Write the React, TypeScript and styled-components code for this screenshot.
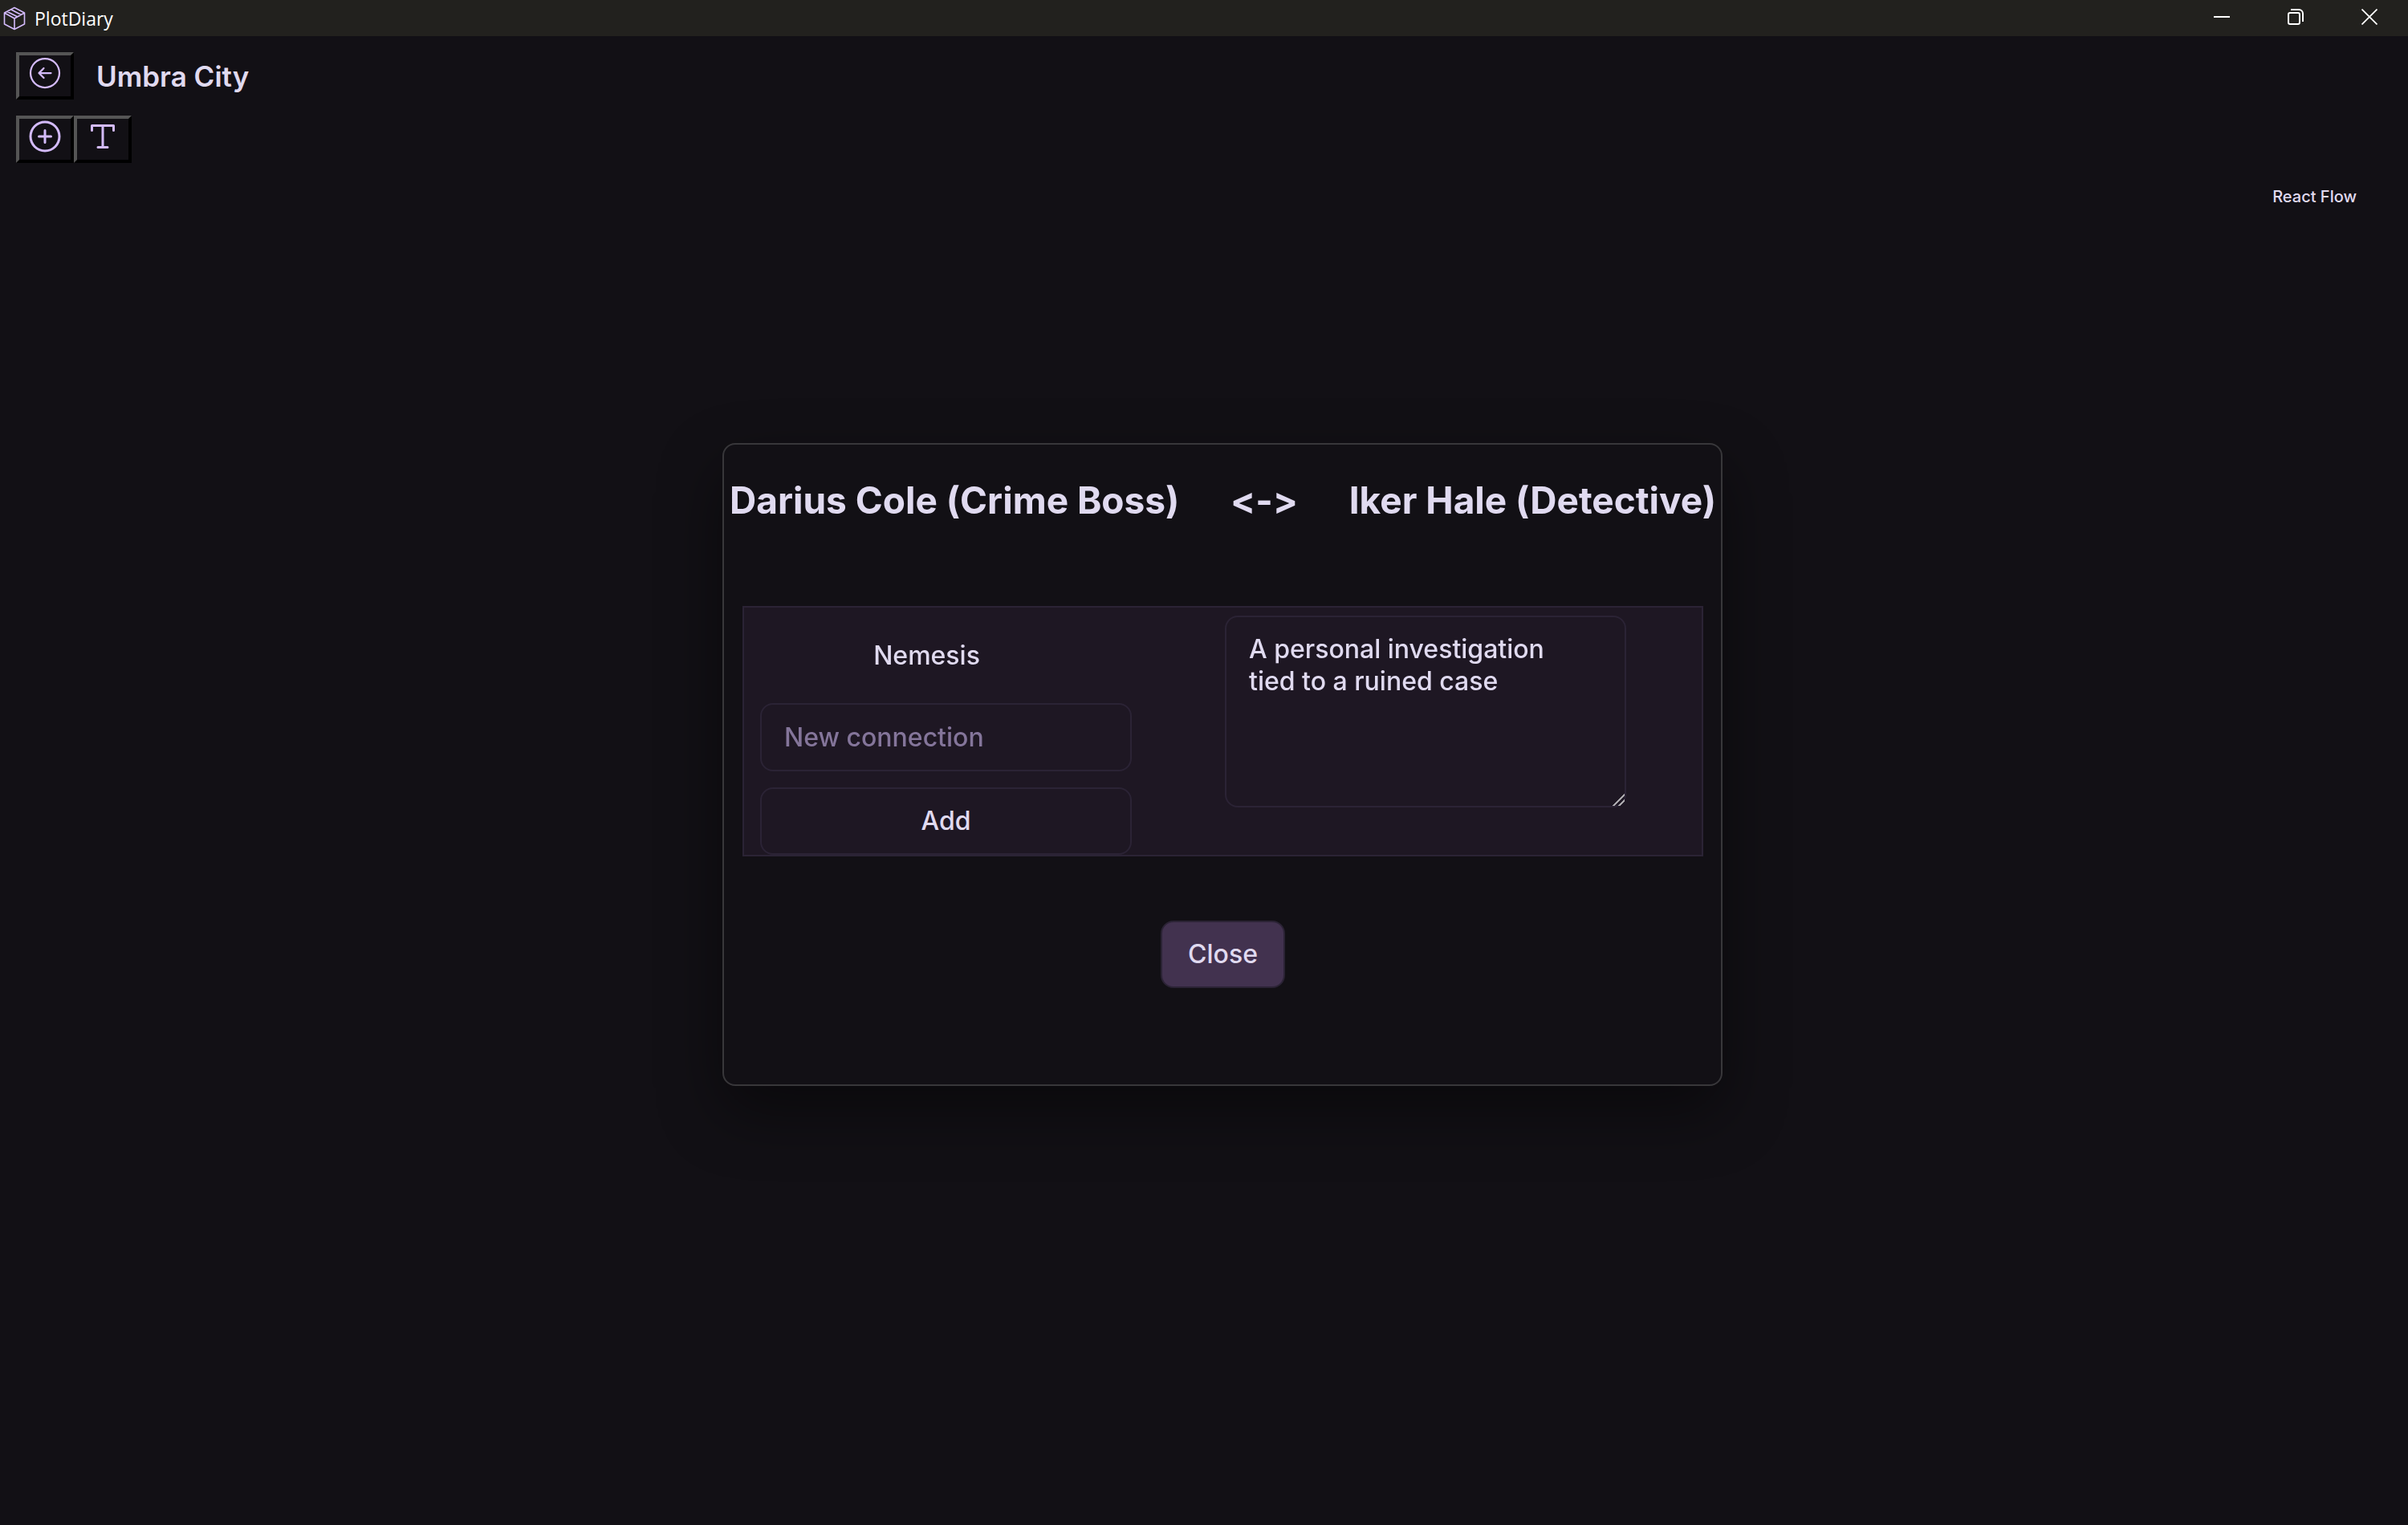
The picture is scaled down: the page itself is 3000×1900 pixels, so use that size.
import React, { useState } from "react";
import styled, { createGlobalStyle } from "styled-components";
import {
  PiArrowCircleLeftLight,
  PiPlusCircle,
  PiTextT,
} from "react-icons/pi";

const color = {
  page: "#121015",
  bar: "#22211e",
  panel: "#1e1723",
  line: "#2b2335",
  text: "#e0daf0",
  muted: "#84759a",
  accent: "#d4bbfc",
  action: "#42324f",
};

const GlobalStyle = createGlobalStyle`
  *, *::before, *::after { box-sizing: border-box; }
  body {
    margin: 0;
    background: ${color.page};
    color: ${color.text};
    font-family: Inter, "Liberation Sans", sans-serif;
  }
`;

const Page = styled.div`
  display: flex;
  flex-direction: column;
  min-height: 100vh;
`;

const TitleBar = styled.header`
  display: flex;
  align-items: flex-start;
  height: 45px;
  padding: 0 2px 0 4px;
  background: ${color.bar};
  color: #fff;
`;

const AppName = styled.div`
  display: flex;
  align-items: center;
  align-self: center;
  gap: 11px;
  flex: 1;
  font: 400 23px/32px "Open Sans", "Noto Sans", sans-serif;

  svg {
    color: ${color.accent};
  }
`;

const WindowButton = styled.button`
  display: flex;
  align-items: center;
  justify-content: center;
  width: 92px;
  height: 42px;
  padding: 0;
  border: 0;
  background: none;
  color: #fff;
`;

const Toolbars = styled.nav`
  display: flex;
  flex-direction: column;
  gap: 20px;
  padding: 20px;
`;

const ToolRow = styled.div`
  display: flex;
  align-items: center;
`;

const ToolButton = styled.button`
  display: flex;
  align-items: center;
  justify-content: center;
  width: 72px;
  height: 59px;
  padding: 0 0 8px;
  border: 4px solid;
  border-color: #555 #000 #000 #555;
  background: ${color.page};
  color: ${color.accent};

  svg {
    flex: none;
  }
`;

const BoardName = styled.h1`
  margin: 0 0 0 28px;
  font-size: 35px;
  line-height: 40px;
  font-weight: 600;
`;

const Canvas = styled.main`
  display: flex;
  flex: 1;
  align-items: flex-start;
  justify-content: flex-end;
  padding: 8px 64px;
`;

const Attribution = styled.a`
  color: ${color.text};
  font-size: 20px;
  line-height: 28px;
  font-weight: 500;
  text-decoration: none;
`;

const Overlay = styled.div`
  position: fixed;
  inset: 0;
  display: flex;
  align-items: center;
  padding: 4px 0 0 30%;
`;

const Dialog = styled.section`
  display: flex;
  flex-direction: column;
  align-items: center;
  width: 1246px;
  padding: 34px 22px 120px 23px;
  border: 2px solid #38373a;
  border-radius: 16px;
  background: ${color.page};
  box-shadow: 0 32px 80px rgba(0, 0, 0, 0.45);
`;

const Pair = styled.h2`
  display: flex;
  align-items: center;
  justify-content: space-between;
  align-self: stretch;
  margin: 0 -16px 97px;
  font-size: 46px;
  line-height: 70px;
  font-weight: 700;
  font-variant-ligatures: none;
  font-feature-settings: "calt" 0;
  white-space: nowrap;
`;

const Relations = styled.form`
  display: flex;
  align-items: flex-start;
  align-self: stretch;
  gap: 116px;
  padding-left: 20px;
  border: 2px solid ${color.line};
  background: ${color.panel};
`;

const Connections = styled.div`
  display: flex;
  flex-direction: column;
  gap: 20px;
  width: 463px;
`;

const Connection = styled.div`
  padding: 40px 48px 19px 0;
  font-size: 32px;
  line-height: 40px;
  font-weight: 500;
  text-align: center;
`;

const field = `
  border: 2px solid ${color.line};
  border-radius: 16px;
  background: ${color.panel};
  color: ${color.text};
  font: 500 32px/40px Inter, "Liberation Sans", sans-serif;
`;

const TextField = styled.input`
  ${field}
  width: 100%;
  height: 85px;
  padding: 0 28px;

  &::placeholder {
    color: ${color.muted};
    opacity: 1;
  }
`;

const Button = styled.button<{ $primary?: boolean }>`
  ${field}
  height: 84px;
  padding: 0 32px;
  background: ${(p) => (p.$primary ? color.action : color.panel)};
`;

const Notes = styled.textarea`
  ${field}
  width: 500px;
  height: 239px;
  margin-top: 10px;
  padding: 20px 48px 20px 28px;

  &::-webkit-resizer {
    background: linear-gradient(
      135deg,
      transparent 0 50%,
      #aaa8ac 50% 59%,
      transparent 59% 73%,
      #aaa8ac 73% 82%,
      transparent 82%
    );
  }
`;

const Footer = styled.footer`
  padding-top: 80px;
`;

function BoxIcon() {
  return (
    <svg width="28" height="30" viewBox="0 0 28 30" fill="none" stroke="currentColor" strokeWidth="1.600" strokeLinejoin="round" aria-hidden="true">
      <path d="M14 1.500 26.500 8v14L14 28.500 1.500 22V8zM1.500 8 14 15l12.500-7M14 15v13.500M5 6.500l13 6.500M10 4l12.500 6.500" />
    </svg>
  );
}

function MinimizeIcon() {
  return (
    <svg width="20" height="20" viewBox="0 0 20 20" aria-hidden="true">
      <path d="M0 10h20" stroke="currentColor" strokeWidth="2" />
    </svg>
  );
}

function RestoreIcon() {
  return (
    <svg width="20" height="20" viewBox="0 0 20 20" fill="none" stroke="currentColor" strokeWidth="2" aria-hidden="true">
      <rect x="1" y="5" width="14" height="14" rx="2" />
      <path d="M4 1h10a5 5 0 0 1 5 5v10" />
    </svg>
  );
}

function CloseIcon() {
  return (
    <svg width="20" height="20" viewBox="0 0 20 20" aria-hidden="true">
      <path d="M0.500 0.500l19 19M19.500 0.500l-19 19" stroke="currentColor" strokeWidth="1.700" />
    </svg>
  );
}

export default function App() {
  const [notes, setNotes] = useState("A personal investigation tied to a ruined case");
  const [draft, setDraft] = useState("");

  return (
    <>
      <GlobalStyle />
      <Page>
        <TitleBar>
          <AppName>
            <BoxIcon />
            PlotDiary
          </AppName>
          <WindowButton aria-label="Minimize"><MinimizeIcon /></WindowButton>
          <WindowButton aria-label="Restore"><RestoreIcon /></WindowButton>
          <WindowButton aria-label="Close window"><CloseIcon /></WindowButton>
        </TitleBar>
        <Toolbars>
          <ToolRow>
            <ToolButton aria-label="Back"><PiArrowCircleLeftLight size={48} /></ToolButton>
            <BoardName>Umbra City</BoardName>
          </ToolRow>
          <ToolRow>
            <ToolButton aria-label="Add node"><PiPlusCircle size={48} /></ToolButton>
            <ToolButton aria-label="Add text"><PiTextT size={48} /></ToolButton>
          </ToolRow>
        </Toolbars>
        <Canvas>
          <Attribution href="#react-flow">React Flow</Attribution>
        </Canvas>
      </Page>
      <Overlay>
        <Dialog role="dialog" aria-labelledby="pair">
          <Pair id="pair">
            <span>Darius Cole (Crime Boss)</span>
            <span>&lt;-&gt;</span>
            <span>Iker Hale (Detective)</span>
          </Pair>
          <Relations onSubmit={(e) => e.preventDefault()}>
            <Connections>
              <Connection>Nemesis</Connection>
              <TextField
                aria-label="New connection"
                placeholder="New connection"
                value={draft}
                onChange={(e) => setDraft(e.target.value)}
              />
              <Button type="submit">Add</Button>
            </Connections>
            <Notes
              aria-label="Description"
              value={notes}
              onChange={(e) => setNotes(e.target.value)}
            />
          </Relations>
          <Footer>
            <Button type="button" $primary>Close</Button>
          </Footer>
        </Dialog>
      </Overlay>
    </>
  );
}
